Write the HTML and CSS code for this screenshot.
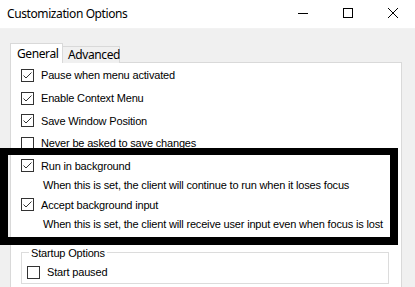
FILE: index.html
```html
<!DOCTYPE html>
<html lang="en">

<head>
  <link rel="stylesheet" href="styles.css">
</head>

<body>
  <div class="window">
    <div class="titlebar">
      <span class="title">Customization Options</span>
      <span class="ctl">
        <svg width="10" height="10" viewBox="0 0 10 10"><path d="M0 5.5h10" stroke="#000" stroke-width="1"/></svg>
      </span>
      <span class="ctl">
        <svg width="10" height="10" viewBox="0 0 10 10"><rect x="0.5" y="0.5" width="9" height="9" fill="none" stroke="#000"/></svg>
      </span>
      <span class="ctl">
        <svg width="10" height="10" viewBox="0 0 10 10"><path d="M0 0L10 10M10 0L0 10" stroke="#000" stroke-width="1"/></svg>
      </span>
    </div>

    <div class="tabs">
      <span class="tab active">General</span>
      <span class="tab">Advanced</span>
    </div>

    <div class="panel">
      <div class="row"><span class="box on"></span>Pause when menu activated</div>
      <div class="row"><span class="box on"></span>Enable Context Menu</div>
      <div class="row"><span class="box on"></span>Save Window Position</div>
      <div class="row"><span class="box"></span>Never be asked to save changes</div>

      <div class="row small first"><span class="box on"></span>Run in background</div>
      <div class="desc">When this is set, the client will continue to run when it loses focus</div>
      <div class="row small"><span class="box on"></span>Accept background input</div>
      <div class="desc">When this is set, the client will receive user input even when focus is lost</div>

      <fieldset class="group">
        <legend>Startup Options</legend>
        <div class="row"><span class="box"></span>Start paused</div>
      </fieldset>
    </div>

    <div class="highlight"></div>
  </div>
</body>

</html>
```

FILE: styles.css
```css
body {
  margin: 0;
  background: #f0f0f0;
  font-family: "Liberation Sans", Arial, sans-serif;
  font-size: 11px;
  letter-spacing: -0.17px;
  color: #000;
}

.window {
  position: relative;
  width: 415px;
  height: 287px;
  overflow: hidden;
}

.titlebar {
  display: flex;
  align-items: center;
  height: 29px;
  background: #fff;
  border-bottom: 1px solid #f2f2f2;
  box-sizing: border-box;
}

.title {
  flex: 1;
  padding-left: 7px;
  padding-bottom: 2px;
  font-family: "Noto Sans", sans-serif;
  font-size: 12px;
  letter-spacing: -0.4px;
}

.ctl {
  display: flex;
  width: 10px;
  height: 10px;
  margin-right: 35px;
  margin-bottom: 2px;
}
.ctl:first-of-type {
  margin-right: 36px;
}
.ctl:last-child {
  margin-right: 17px;
}

.tabs {
  display: flex;
  align-items: flex-end;
  height: 20px;
  margin-top: 13px;
  padding-left: 10px;
  font-family: "Noto Sans", sans-serif;
  font-size: 12px;
  letter-spacing: -0.4px;
}

.tab {
  height: 17px;
  line-height: 16px;
  padding: 0 4px 0 5px;
  border: 1px solid #d9d9d9;
  border-bottom: none;
  box-sizing: border-box;
  background: #f0f0f0;
  margin-bottom: -1px;
}
.tab.active {
  position: relative;
  z-index: 1;
  height: 20px;
  line-height: 19px;
  width: 53px;
  padding-left: 6px;
  background: #fff;
  margin-bottom: -1px;
}
.tab + .tab {
  border-left: none;
  width: 57px;
}

.panel {
  margin-left: 10px;
  width: 392px;
  height: 240px;
  box-sizing: border-box;
  background: #fff;
  border: 1px solid #d9d9d9;
  padding-top: 1px;
  padding-left: 10px;
}

.row {
  display: flex;
  align-items: center;
  height: 22.7px;
}
.row.small {
  height: 20px;
}
.row.first {
  margin-top: 1px;
}

.box {
  width: 13px;
  height: 13px;
  box-sizing: border-box;
  border: 1px solid #333;
  margin-right: 7px;
  background: #fff;
  flex: none;
}
.box.on {
  background: #fff url("data:image/svg+xml,%3Csvg xmlns='http://www.w3.org/2000/svg' width='11' height='11'%3E%3Cpath d='M1.5 5.5L4 8L9.5 2.5' fill='none' stroke='%23333' stroke-width='1'/%3E%3C/svg%3E") no-repeat 0 0;
}

.desc {
  height: 19px;
  line-height: 19px;
  padding-left: 22px;
}

.group {
  margin: 13px 0 0 0;
  width: 368px;
  box-sizing: border-box;
  border: 1px solid #dcdcdc;
  padding: 2px 0 0 5px;
}
.group legend {
  padding: 0 2px;
  margin-left: 2px;
  line-height: 12px;
}

.highlight {
  position: absolute;
  left: 0;
  top: 148px;
  width: 398px;
  height: 97px;
  box-sizing: border-box;
  border: 8px solid #000;
  border-top-width: 7px;
}
```
